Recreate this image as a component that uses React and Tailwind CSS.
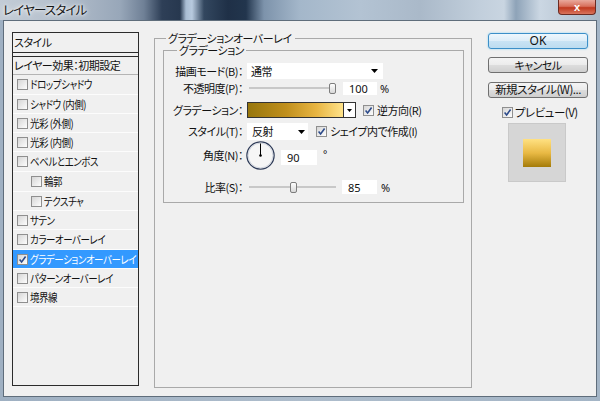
import React from "react";

const Check = () => (
  <svg width="9" height="9" viewBox="0 0 9 9" className="block">
    <path d="M1.6 4.6 L3.6 6.9 L7.6 1.6" fill="none" stroke="#2c4a8a" strokeWidth="1.6" />
  </svg>
);

function Checkbox({ checked }) {
  return (
    <span className="flex h-[11px] w-[11px] shrink-0 items-center justify-center border border-[#8f8f8f] bg-[linear-gradient(135deg,#d6d6d6,#fdfdfd)]">
      {checked && <Check />}
    </span>
  );
}

const Arrow = () => (
  <svg width="7" height="4" viewBox="0 0 7 4" className="block">
    <polygon points="0,0 7,0 3.5,4" fill="#000" />
  </svg>
);

const rows = [
  { t: "ドロップシャドウ", cls: "h-[20px] pl-[4px] border-b border-[#fcfcfc]" },
  { t: "シャドウ (内側)", cls: "h-[19px] pl-[4px] border-b border-[#fcfcfc]" },
  { t: "光彩 (外側)", cls: "h-[19px] pl-[4px] border-b border-[#fcfcfc]" },
  { t: "光彩 (内側)", cls: "h-[19px] pl-[4px] border-b border-[#fcfcfc]" },
  { t: "ベベルとエンボス", cls: "h-[20px] pl-[4px] border-b border-[#fcfcfc]" },
  { t: "輪郭", cls: "h-[20px] pl-[18px] border-b border-[#fcfcfc]" },
  { t: "テクスチャ", cls: "h-[19px] pl-[18px] border-b border-[#fcfcfc]" },
  { t: "サテン", cls: "h-[19px] pl-[4px] border-b border-[#fcfcfc]" },
  { t: "カラーオーバーレイ", cls: "h-[20px] pl-[4px] border-b border-[#fcfcfc]" },
  { t: "グラデーションオーバーレイ", cls: "h-[19px] pl-[4px] border-b border-[#fcfcfc] bg-[#3399ff] text-white", checked: true },
  { t: "パターンオーバーレイ", cls: "h-[19px] pl-[4px] border-b border-[#fcfcfc]" },
  { t: "境界線", cls: "h-[19px] pl-[4px] border-b border-[#fcfcfc]" },
];

const Thumb = () => (
  <span className="block h-[11px] w-[7px] shrink-0 rounded-[2px] border border-[#7d7d7d] bg-[linear-gradient(180deg,#fefefe,#d8d8d8)]" />
);

export default function App() {
  return (
    <div className="flex h-[401px] w-[600px] flex-col overflow-hidden bg-[linear-gradient(90deg,#9fb0c2,#aebdcc_50%,#a4b5c6)] font-['Noto_Sans_CJK_JP',sans-serif] text-[11px] tracking-[-0.5px] text-[#111] [font-feature-settings:'palt']">
      {/* title bar */}
      <div className="flex h-[20px] shrink-0 items-start justify-between bg-[linear-gradient(90deg,#c3ccd6_0%,#b4bfcc_10%,#98a7b9_20%,#6f8096_24%,#2e3f57_27%,#27384f_30%,#a9bdd3_31%,#b8cade_32%,#33475f_34%,#1f3047_38%,#22354d_41%,#7d93ab_44%,#a4b7ca_50%,#b3c3d3_60%,#aab9c9_70%,#c2cfdc_80%,#c9d5e1_84%,#8ea3b8_86%,#cbd7e3_90%,#a9b8c7_100%)]">
        <span className="pl-[3px] pt-[1px] text-[12.5px] leading-[18px] tracking-[-0.8px] text-[#161616] [text-shadow:0_0_6px_#fff,0_0_3px_#fff]">
          レイヤースタイル
        </span>
        <span className="mr-[4px] flex h-[15px] w-[38px] items-center justify-center rounded-b-[4px] border border-t-0 border-[#6b2b22] bg-[linear-gradient(180deg,#e9a99c_0%,#d8705c_45%,#c0391f_55%,#d9745c_100%)] font-['Liberation_Sans',sans-serif] text-[11px] font-bold leading-none tracking-normal text-white">
          x
        </span>
      </div>

      {/* content */}
      <div className="mx-[3px] mb-[4px] flex flex-1 items-start border border-[#5f6d7b] bg-[#f0f0f0]">
        {/* left panel */}
        <div className="ml-[8px] mt-[11px] flex h-[354px] w-[127px] shrink-0 flex-col overflow-hidden border border-[#2b2b2b]">
          <div className="flex h-[20px] shrink-0 items-center border-b border-[#2b2b2b] pl-[1px] leading-none">スタイル</div>
          <div className="h-[4px] shrink-0 border-b border-[#2b2b2b]" />
          <div className="flex h-[18px] shrink-0 items-center whitespace-nowrap border-b border-[#b4b4b4] pl-[1px] leading-none">
            レイヤー効果：初期設定
          </div>
          {rows.map((r) => (
            <div key={r.t} className={"flex shrink-0 items-center gap-[2px] whitespace-nowrap leading-none " + r.cls}>
              <Checkbox checked={r.checked} />
              <span className="origin-left scale-x-[0.86]">{r.t}</span>
            </div>
          ))}
        </div>

        {/* middle */}
        <div className="ml-[15px] mt-[17px] h-[350px] w-[318px] shrink-0 border border-[#a9a9a9]">
          <div className="-mt-[6px] ml-[11px] w-fit bg-[#f0f0f0] pl-[2px] pr-[4px] leading-[11px]">
            グラデーションオーバーレイ
          </div>
          <div className="ml-[8px] mt-[6px] w-[301px] border border-[#a9a9a9] pb-[8px]">
            <div className="-mt-[6px] ml-[13px] w-fit bg-[#f0f0f0] px-[2px] leading-[11px]">グラデーション</div>

            {/* row 1 */}
            <div className="mt-[7px] flex h-[16px] items-center whitespace-nowrap leading-none">
              <span className="w-[79px] shrink-0 text-right">描画モード(B)：</span>
              <div className="ml-[4px] flex h-[16px] w-[136px] items-center justify-between bg-white pl-[4px] pr-[5px]">
                <span>通常</span>
                <Arrow />
              </div>
            </div>

            {/* row 2 */}
            <div className="mt-[2px] flex h-[14px] items-center whitespace-nowrap leading-none">
              <span className="w-[79px] shrink-0 text-right">不透明度(P)：</span>
              <div className="ml-[4px] flex h-[14px] w-[91px] items-center px-[2px]">
                <span className="block h-[2px] flex-1 bg-[#c8c8c8]" />
                <Thumb />
              </div>
              <div className="ml-[5px] flex h-[13px] w-[34px] items-center bg-white pl-[6px] font-['Noto_Sans',sans-serif] text-[11px] tracking-normal">100</div>
              <span className="ml-[3px] font-['Noto_Sans',sans-serif] tracking-normal">%</span>
            </div>

            {/* row 3 */}
            <div className="mt-[7px] flex h-[16px] items-center whitespace-nowrap leading-none">
              <span className="w-[79px] shrink-0 text-right">グラデーション：</span>
              <div className="ml-[4px] h-[16px] w-[97px] border border-[#333] bg-[linear-gradient(90deg,#97760c_0%,#c08f1c_40%,#e8b542_72%,#ffe38a_100%)]" />
              <div className="flex h-[16px] w-[12px] items-center justify-center border border-l-0 border-[#333] bg-white">
                <svg width="5" height="3" viewBox="0 0 5 3" className="block">
                  <polygon points="0,0 5,0 2.5,3" fill="#000" />
                </svg>
              </div>
              <span className="ml-[7px] flex items-center gap-[3px]">
                <Checkbox checked />
                <span>逆方向(R)</span>
              </span>
            </div>

            {/* row 4 */}
            <div className="mt-[5px] flex h-[17px] items-center whitespace-nowrap leading-none">
              <span className="w-[79px] shrink-0 text-right">スタイル(T)：</span>
              <div className="ml-[4px] flex h-[17px] w-[61px] items-center justify-between bg-white pl-[5px] pr-[3px]">
                <span>反射</span>
                <Arrow />
              </div>
              <span className="ml-[8px] flex items-center gap-[3px]">
                <Checkbox checked />
                <span>シェイプ内で作成(I)</span>
              </span>
            </div>

            {/* row 5 */}
            <div className="mt-[1px] flex h-[29px] items-center whitespace-nowrap leading-none">
              <span className="w-[79px] shrink-0 text-right">角度(N)：</span>
              <svg width="29" height="29" viewBox="0 0 29 29" className="ml-[3px] block shrink-0">
                <circle cx="14.5" cy="14.5" r="13.6" fill="#f6f6f6" stroke="#2e3b58" strokeWidth="1.3" />
                <circle cx="14.5" cy="14.5" r="12.4" fill="none" stroke="#c9ced8" strokeWidth="0.8" />
                <line x1="14.5" y1="2.5" x2="14.5" y2="14.5" stroke="#000" strokeWidth="1" />
                <circle cx="14.5" cy="14.5" r="1.3" fill="#000" />
              </svg>
              <div className="ml-[6px] mt-[4px] flex h-[15px] w-[36px] items-center bg-white pl-[6px] font-['Noto_Sans',sans-serif] tracking-normal">90</div>
              <span className="ml-[6px] mt-[8px] self-start font-['Noto_Sans',sans-serif] text-[10px]">°</span>
            </div>

            {/* row 6 */}
            <div className="mt-[10px] flex h-[14px] items-center whitespace-nowrap leading-none">
              <span className="w-[79px] shrink-0 text-right">比率(S)：</span>
              <div className="ml-[4px] flex h-[14px] w-[91px] items-center px-[2px]">
                <span className="block h-[2px] w-[41px] bg-[#c8c8c8]" />
                <Thumb />
                <span className="block h-[2px] flex-1 bg-[#c8c8c8]" />
              </div>
              <div className="ml-[4px] flex h-[14px] w-[35px] items-center bg-white pl-[6px] font-['Noto_Sans',sans-serif] tracking-normal">85</div>
              <span className="ml-[4px] font-['Noto_Sans',sans-serif] tracking-normal">%</span>
            </div>
          </div>
        </div>

        {/* right */}
        <div className="ml-[16px] mt-[12px] flex w-[100px] shrink-0 flex-col">
          <div className="flex h-[16px] items-center justify-center rounded-[3px] border border-[#3c8fc8] bg-[linear-gradient(180deg,#eef7fd,#dcedf8_50%,#c9e3f4_50%,#bcdcf0)] font-['Noto_Sans',sans-serif] text-[12px] leading-none tracking-normal shadow-[0_0_2px_#7fd0f5]">
            OK
          </div>
          <div className="mt-[8px] flex h-[16px] items-center justify-center rounded-[3px] border border-[#707070] bg-[linear-gradient(180deg,#f4f4f4,#ebebeb_50%,#dddddd_50%,#cfcfcf)] leading-none">
            キャンセル
          </div>
          <div className="mt-[9px] flex h-[16px] items-center justify-center whitespace-nowrap rounded-[3px] border border-[#707070] bg-[linear-gradient(180deg,#f4f4f4,#ebebeb_50%,#dddddd_50%,#cfcfcf)] text-[11.5px] leading-none">
            新規スタイル(W)...
          </div>
          <div className="ml-[14px] mt-[8px] flex h-[13px] items-center gap-[2px] whitespace-nowrap leading-none">
            <Checkbox checked />
            <span className="text-[11.5px]">プレビュー(V)</span>
          </div>
          <div className="ml-[20px] mt-[4px] flex h-[59px] w-[58px] items-center justify-center border border-[#c9c9c9] bg-[#d6d6d6]">
            <div className="h-[28px] w-[28px] bg-[linear-gradient(180deg,#ffe182,#e9b944_50%,#a47b09)]" />
          </div>
        </div>
      </div>
    </div>
  );
}
